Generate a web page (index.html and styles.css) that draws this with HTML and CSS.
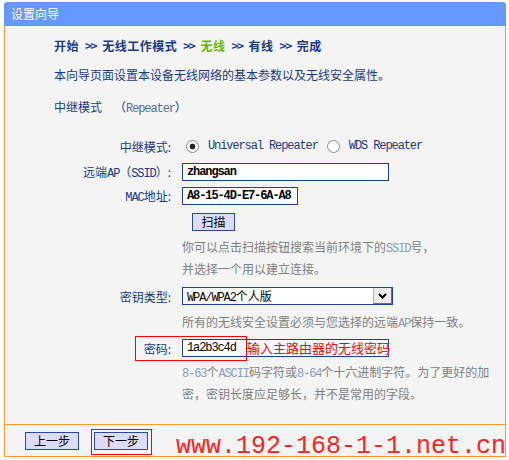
FILE: index.html
```html
<!DOCTYPE html>
<html lang="zh-CN">
<head>
<meta charset="utf-8">
<title>设置向导</title>
<link rel="stylesheet" href="styles.css">
</head>
<body>
<div class="panel">
  <div class="hd">设置向导</div>
  <div class="content">
    <div class="crumbs">
      <span class="step">开始</span><span class="arr">&gt;&gt;</span><span class="step">无线工作模式</span><span class="arr">&gt;&gt;</span><span class="step cur">无线</span><span class="arr">&gt;&gt;</span><span class="step">有线</span><span class="arr">&gt;&gt;</span><span class="step">完成</span>
    </div>
    <p class="desc">本向导页面设置本设备无线网络的基本参数以及无线安全属性。</p>
    <p class="mode">中继模式<span class="mode-en">（<span class="m">Repeater</span>）</span></p>
    <div class="form">
      <div class="row r1">
        <div class="lbl">中继模式:</div>
        <div class="val radios">
          <span class="radio on"></span><span class="m opt">Universal Repeater</span>
          <span class="radio second"></span><span class="m opt">WDS Repeater</span>
        </div>
      </div>
      <div class="row r2">
        <div class="lbl">远端<span class="m">AP</span>（<span class="m">SSID</span>）:</div>
        <div class="val"><div class="inp w-long m">zhangsan</div></div>
      </div>
      <div class="row r3">
        <div class="lbl"><span class="m">MAC</span>地址:</div>
        <div class="val"><div class="inp w-mac m">A8-15-4D-E7-6A-A8</div></div>
      </div>
      <div class="row r4">
        <div class="lbl"></div>
        <div class="val"><button class="btn scan">扫描</button></div>
      </div>
      <div class="row r5">
        <div class="lbl"></div>
        <div class="val hint">你可以点击扫描按钮搜索当前环境下的<span class="m">SSID</span>号，<br>并选择一个用以建立连接。</div>
      </div>
      <div class="row r6">
        <div class="lbl">密钥类型:</div>
        <div class="val">
          <div class="sel">
            <span class="sel-txt"><span class="m">WPA/WPA2</span>个人版</span>
            <span class="sel-btn"><svg width="9" height="6" viewBox="0 0 9 6"><polyline points="1,1 4.5,4.5 8,1" fill="none" stroke="#000" stroke-width="2"/></svg></span>
          </div>
        </div>
      </div>
      <div class="row r7">
        <div class="lbl"></div>
        <div class="val hint">所有的无线安全设置必须与您选择的远端<span class="m">AP</span>保持一致。</div>
      </div>
      <div class="row r8">
        <div class="lbl">密码:</div>
        <div class="val">
          <div class="inp w-long m pw">1a2b3c4d</div>
          <span class="note">输入主路由器的无线密码</span>
        </div>
        <span class="mark"></span>
      </div>
      <div class="row r9">
        <div class="lbl"></div>
        <div class="val hint"><span class="m">8-63</span>个<span class="m">ASCII</span>码字符或<span class="m">8-64</span>个十六进制字符。为了更好的加<br>密，密钥长度应足够长，并不是常用的字段。</div>
      </div>
    </div>
  </div>
  <div class="ft">
    <button class="btn nav">上一步</button>
    <span class="hl"><button class="btn nav">下一步</button></span>
    <span class="wm">www.192-168-1-1.net.cn</span>
  </div>
</div>
</body>
</html>
```
FILE: styles.css
```css
body {
  margin: 0;
  background: #ffffff;
  font-family: "Noto Sans CJK SC", "Noto Sans", sans-serif;
  font-size: 12px;
  color: #1a3a8a;
}

.panel {
  margin: 2px 0 0 4px;
  width: 502px;
}

.hd {
  height: 24px;
  line-height: 24px;
  background: #6699ff;
  color: #ffffff;
  padding-left: 7px;
  border-radius: 3px 3px 0 0;
}

.content {
  height: 399px;
  box-sizing: border-box;
  border: 1px solid #ff9933;
  border-top: 0;
  background: #f4f4f4;
  padding-top: 9px;
}

.m {
  font-family: "Liberation Mono", monospace;
  font-size: 12px;
  letter-spacing: -1.1px;
}

.crumbs {
  display: flex;
  align-items: center;
  gap: 6px;
  height: 20px;
  padding-left: 49px;
  font-weight: bold;
  color: #1a3a8a;
}

.step {
  letter-spacing: 0.5px;
}

.step.cur {
  color: #66bb00;
}

.arr {
  font-size: 12px;
  letter-spacing: -1.5px;
  color: #1a3a8a;
}

.desc {
  margin: 10px 0 0 49px;
  line-height: 20px;
}

.mode {
  margin: 12px 0 0 49px;
  line-height: 20px;
}

.mode-en {
  margin-left: 12px;
}

.mode-en .m {
  color: #5a6c9c;
}

.form {
  margin-top: 17px;
  display: flex;
  flex-direction: column;
}

.row {
  display: grid;
  grid-template-columns: 166px 1fr;
  column-gap: 11px;
  align-items: center;
  position: relative;
}

.lbl {
  text-align: right;
  color: #1a3a8a;
  white-space: nowrap;
}

.val {
  position: relative;
}

.r1 { height: 20px; }
.r2 { margin-top: 7px; height: 18px; }
.r3 { margin-top: 6px; height: 18px; }
.r4 { margin-top: 8px; height: 18px; }
.r5 { margin-top: 6px; }
.r6 { margin-top: 9px; height: 18px; }
.r7 { margin-top: 7px; }
.r8 { margin-top: 5px; height: 18px; }
.r9 { margin-top: 5px; }

.radios {
  display: flex;
  align-items: center;
}

.radio {
  display: inline-block;
  width: 13px;
  height: 13px;
  box-sizing: border-box;
  border: 1px solid #8a8a8a;
  border-radius: 50%;
  background: #ffffff;
  margin-left: 4px;
}

.radio.on {
  background: radial-gradient(circle, #222222 0 2.6px, #ffffff 3.2px);
}

.radio.second {
  margin-left: 9px;
}

.opt {
  margin-left: 9px;
  color: #1a3a8a;
}

.inp {
  box-sizing: border-box;
  height: 18px;
  line-height: 16px;
  border: 1px solid #1f3f9f;
  background: #ffffff;
  padding-left: 4px;
  color: #000000;
  font-weight: bold;
}

.w-long { width: 207px; }
.w-mac { width: 116px; }

.btn {
  box-sizing: border-box;
  height: 18px;
  border: 1px solid #2a48a8;
  background: #dcdcfc;
  color: #000000;
  font-family: "Noto Sans CJK SC", sans-serif;
  font-size: 12px;
  line-height: 16px;
  padding: 0;
  display: block;
}

.scan {
  width: 43px;
  margin-left: 10px;
}

.hint {
  color: #808080;
  line-height: 19px;
}

.hint .m {
  color: #8c9cbc;
}

.sel {
  box-sizing: border-box;
  width: 211px;
  height: 18px;
  border: 1px solid #1f3f9f;
  background: #ffffff;
  display: flex;
  align-items: stretch;
}

.sel-txt {
  flex: 1;
  padding-left: 4px;
  line-height: 16px;
  color: #000000;
}

.sel-txt .m {
  color: #000000;
}

.sel-btn {
  width: 19px;
  box-sizing: border-box;
  background: #ececec;
  border-left: 1px solid #b0b0b0;
  border-right: 1px solid #707070;
  border-bottom: 1px solid #707070;
  display: flex;
  align-items: center;
  justify-content: center;
}

.pw {
  font-weight: normal;
}

.note {
  position: absolute;
  left: 65px;
  top: 0;
  line-height: 18px;
  font-size: 13px;
  color: #ff0000;
}

.mark {
  position: absolute;
  left: 130px;
  top: -3px;
  width: 112px;
  height: 25px;
  box-sizing: border-box;
  border: 1px solid #ff0000;
}

.ft {
  position: relative;
  overflow: hidden;
  height: 32px;
  box-sizing: border-box;
  border: 1px solid #ff9933;
  border-top: 0;
  background: #f4f4f4;
  display: flex;
  align-items: flex-start;
  padding: 4px 0 0 20px;
}

.nav {
  width: 54px;
}

.ft > .nav {
  margin-top: 3px;
}

.hl {
  margin-left: 12px;
  border: 1px solid #ff0000;
  padding: 2px 3px 4px 2px;
}

.wm {
  position: absolute;
  left: 171px;
  top: 9px;
  font-family: "Liberation Mono", monospace;
  font-size: 25px;
  line-height: 25px;
  color: #ff2222;
  white-space: nowrap;
}
```
